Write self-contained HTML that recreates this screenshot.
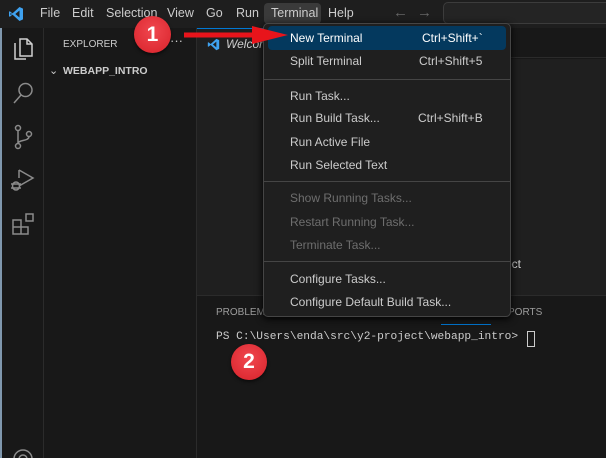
<!DOCTYPE html><html><head><style>
body{margin:0;width:606px;height:458px;background:#181818;position:relative;overflow:hidden;font-family:"Segoe UI","Liberation Sans",sans-serif;color:#ccc}
div{position:absolute;box-sizing:border-box}
.t{font-size:12.5px;white-space:nowrap}
.mi{left:290px;font-size:12px;color:#ccc;white-space:nowrap}
.sc{font-size:12px;color:#ccc;white-space:nowrap}
.dis{color:#6e6e6e}
.sep{left:263px;width:247px;height:1px;background:#454545}
</style></head><body>
<div style="left:0;top:0;width:606px;height:28px;background:#1e1e1e"></div>
<svg style="position:absolute;left:8px;top:6px" width="16" height="16" viewBox="0 0 16 16"><path d="M11.5 1 L15 2.6 V13.4 L11.5 15 L4.5 8.6 L1.8 10.7 L1 10.3 V5.7 L1.8 5.3 L4.5 7.4 Z M11.5 4.5 L7.3 8 L11.5 11.5 Z M2.5 6.7 V9.3 L3.9 8 Z" fill="#3fa2f0"/></svg>
<div class="t" style="left:40px;top:6px">File</div>
<div class="t" style="left:72px;top:6px">Edit</div>
<div class="t" style="left:106px;top:6px">Selection</div>
<div class="t" style="left:167px;top:6px">View</div>
<div class="t" style="left:206px;top:6px">Go</div>
<div class="t" style="left:236px;top:6px">Run</div>
<div style="left:264px;top:3px;width:57px;height:21px;background:#3a3a3a;border-radius:4px"></div>
<div class="t" style="left:271px;top:6px">Terminal</div>
<div class="t" style="left:328px;top:6px">Help</div>
<div class="t" style="left:393px;top:4px;color:#666;font-size:15px">←</div>
<div class="t" style="left:417px;top:4px;color:#666;font-size:15px">→</div>
<div style="left:443px;top:2px;width:170px;height:22px;background:#242424;border:1px solid #3c3c3c;border-radius:5px"></div>
<div style="left:0;top:28px;width:2px;height:430px;background:#7f97ad"></div>
<div style="left:2px;top:28px;width:42px;height:430px;background:#181818;border-right:1px solid #2b2b2b"></div>
<svg style="position:absolute;left:11px;top:35px" width="24" height="26" viewBox="0 0 24 26" fill="none" stroke="#d0d0d0" stroke-width="1.5"><path d="M9 4h7l5 5v12H9z M4 8v16h11"/><path d="M16 4v5h5"/></svg>
<svg style="position:absolute;left:12px;top:80px" width="24" height="26" viewBox="0 0 24 26" fill="none" stroke="#8b8b8b" stroke-width="1.5"><circle cx="13.5" cy="10" r="6.5"/><path d="M9 15 2 23"/></svg>
<svg style="position:absolute;left:12px;top:124px" width="24" height="26" viewBox="0 0 24 26" fill="none" stroke="#8b8b8b" stroke-width="1.5"><circle cx="6" cy="4" r="2.5"/><circle cx="6" cy="22" r="2.5"/><circle cx="17" cy="10" r="2.5"/><path d="M6 6.5v13M17 12.5c0 5-11 3-11 7"/></svg>
<svg style="position:absolute;left:10px;top:167px" width="26" height="26" viewBox="0 0 26 26" fill="none" stroke="#8b8b8b" stroke-width="1.5"><path d="M9 3v8M9 3l14 8-14 8"/><ellipse cx="6" cy="19" rx="3.5" ry="4"/><path d="M1 17h10M1 21h10"/></svg>
<svg style="position:absolute;left:11px;top:211px" width="26" height="26" viewBox="0 0 26 26" fill="none" stroke="#8b8b8b" stroke-width="1.5"><path d="M2 9h8v14H2zM2 16h15v7H10"/><rect x="15" y="3" width="7" height="7"/></svg>
<svg style="position:absolute;left:12px;top:448px" width="24" height="10" viewBox="0 0 24 10" fill="none" stroke="#8b8b8b" stroke-width="1.5"><circle cx="11" cy="11" r="9"/><circle cx="11" cy="11" r="4"/></svg>
<div style="left:45px;top:28px;width:152px;height:430px;background:#181818;border-right:1px solid #2b2b2b"></div>
<div class="t" style="left:63px;top:39px;font-size:10px">EXPLORER</div>
<div class="t" style="left:170px;top:33px;font-size:13px">···</div>
<div class="t" style="left:49px;top:64px;font-size:11px">⌄</div>
<div class="t" style="left:63px;top:65px;font-size:10.5px;font-weight:bold">WEBAPP_INTRO</div>
<div style="left:197px;top:28px;width:409px;height:30px;background:#181818;border-bottom:1px solid #2b2b2b"></div>
<div style="left:197px;top:28px;width:70px;height:31px;background:#1f1f1f;border-top:1px solid #0078d4"></div>
<svg style="position:absolute;left:207px;top:38px" width="13" height="13" viewBox="0 0 16 16"><path d="M11.5 1 L15 2.6 V13.4 L11.5 15 L4.5 8.6 L1.8 10.7 L1 10.3 V5.7 L1.8 5.3 L4.5 7.4 Z M11.5 4.5 L7.3 8 L11.5 11.5 Z" fill="#3fa2f0"/></svg>
<div class="t" style="left:226px;top:37px;font-size:12px;font-style:italic">Welcon</div>
<div style="left:197px;top:59px;width:409px;height:236px;background:#1f1f1f"></div>
<div class="t" style="left:505px;top:257px;font-size:12px">ect</div>
<div style="left:197px;top:295px;width:409px;height:163px;background:#181818;border-top:1px solid #2b2b2b"></div>
<div class="t" style="left:216px;top:307px;font-size:10px;color:#9d9d9d">PROBLEMS</div>
<div class="t" style="left:508px;top:307px;font-size:10px;color:#9d9d9d">PORTS</div>
<div style="left:441px;top:324px;width:50px;height:1px;background:#0078d4"></div>
<div class="t" style="left:216px;top:331px;font-family:'Liberation Mono',monospace;font-size:11.2px;color:#ccc">PS C:\Users\enda\src\y2-project\webapp_intro&gt;</div>
<div style="left:527px;top:331px;width:8px;height:16px;border:1px solid #ccc"></div>
<div style="left:263px;top:23px;width:248px;height:294px;background:#1f1f1f;border:1px solid #454545;border-radius:5px;box-shadow:0 2px 8px #000"></div>
<div style="left:268px;top:26px;width:238px;height:24px;background:#04395e;border-radius:4px"></div>
<div class="mi" style="top:31px;color:#fff">New Terminal</div><div class="sc" style="left:422px;top:31px;color:#fff">Ctrl+Shift+`</div>
<div class="mi" style="top:54px">Split Terminal</div><div class="sc" style="left:419px;top:54px">Ctrl+Shift+5</div>
<div class="sep" style="top:79px"></div>
<div class="mi" style="top:89px">Run Task...</div>
<div class="mi" style="top:111px">Run Build Task...</div><div class="sc" style="left:418px;top:111px">Ctrl+Shift+B</div>
<div class="mi" style="top:135px">Run Active File</div>
<div class="mi" style="top:158px">Run Selected Text</div>
<div class="sep" style="top:181px"></div>
<div class="mi dis" style="top:191px">Show Running Tasks...</div>
<div class="mi dis" style="top:215px">Restart Running Task...</div>
<div class="mi dis" style="top:238px">Terminate Task...</div>
<div class="sep" style="top:261px"></div>
<div class="mi" style="top:272px">Configure Tasks...</div>
<div class="mi" style="top:295px">Configure Default Build Task...</div>
<svg style="position:absolute;left:180px;top:22px" width="110" height="26" viewBox="0 0 110 26"><path d="M4 13H78" stroke="#e8141b" stroke-width="5"/><path d="M72 4 L108 13 L72 22 Z" fill="#e8141b"/></svg>
<div style="left:134px;top:16px;width:37px;height:37px;border-radius:50%;background:radial-gradient(circle at 50% 40%,#f0474f,#d8222a);box-shadow:0 2px 3px #0008;color:#fff;font:bold 21px 'Liberation Sans',sans-serif;text-align:center;line-height:37px">1</div>
<div style="left:231px;top:344px;width:36px;height:36px;border-radius:50%;background:radial-gradient(circle at 50% 40%,#f0474f,#d8222a);box-shadow:0 2px 3px #0008;color:#fff;font:bold 21px 'Liberation Sans',sans-serif;text-align:center;line-height:36px">2</div>
</body></html>
